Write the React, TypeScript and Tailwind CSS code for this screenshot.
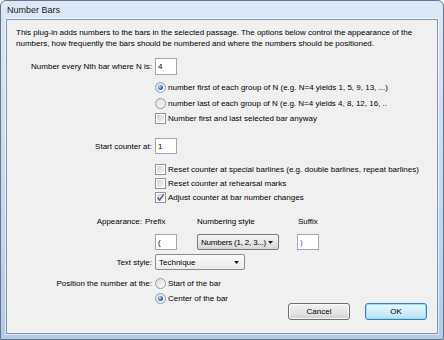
import React from "react";

function Radio({ checked, label }: { checked?: boolean; label: string }) {
  return (
    <div className="flex h-full items-center">
      <span className="flex h-[11px] w-[11px] shrink-0 items-center justify-center rounded-full border border-[#9a9c9e] bg-linear-to-br from-[#d9dbdd] to-[#fbfbfb]">
        {checked && (
          <span className="h-[5px] w-[5px] rounded-full bg-[radial-gradient(circle_at_35%_35%,#b6e0fb,#2a6cb8_60%,#19488a)]" />
        )}
      </span>
      <span className="ml-[2px] whitespace-nowrap">{label}</span>
    </div>
  );
}

function Check({ checked, label }: { checked?: boolean; label: string }) {
  return (
    <div className="flex h-full items-center">
      <span className="flex h-[11px] w-[11px] shrink-0 items-center justify-center border border-[#939597] bg-white">
        <span className="flex h-[7px] w-[7px] items-center justify-center bg-linear-to-br from-[#d3d5d8] to-[#f6f6f6]">
          {checked && (
            <svg width="9" height="9" viewBox="0 0 9 9" className="overflow-visible">
              <path d="M1.5 4.5 L3.6 7 L7.8 1.2" fill="none" stroke="#4a5f8f" strokeWidth="1.4" />
            </svg>
          )}
        </span>
      </span>
      <span className="ml-[2px] whitespace-nowrap">{label}</span>
    </div>
  );
}

function TextBox({ value, className }: { value: string; className?: string }) {
  return (
    <div className={`flex h-full w-[22px] items-center border border-[#a3a6ad] bg-white pl-[2px] ${className ?? ""}`}>
      {value}
    </div>
  );
}

function Arrow() {
  return (
    <svg width="5" height="3" viewBox="0 0 5 3" className="shrink-0">
      <polygon points="0,0 5,0 2.5,3" fill="#1a1a1a" />
    </svg>
  );
}

export default function App() {
  return (
    <div className="h-[340px] w-[444px] font-['Liberation_Sans',Arial,sans-serif] text-black">
      <div className="flex h-full w-full flex-col rounded-t-[6px] border border-[#65768b] bg-linear-to-b from-[#dce8f5] via-[#c9dbee] to-[#b4cbe5] px-[5px] pb-[5px]">
        <div className="flex h-[18px] items-center pl-[1px] pt-[2px] text-[9px] text-[#1b1b1b]">Number Bars</div>

        <div className="flex flex-1 flex-col border border-[#8397ad] bg-[#f0f0f0] pl-[9px] pr-[10px] pt-[7px] text-[8px] leading-[11px] shadow-[0_0_0_1px_rgba(255,255,255,0.55)]">
          <p className="whitespace-nowrap">
            This plug-in adds numbers to the bars in the selected passage. The options below control the appearance of the
            <br />
            numbers, how frequently the bars should be numbered and where the numbers should be positioned.
          </p>

          <div className="mt-[9px] flex h-[17px] items-center">
            <span className="w-[136px] whitespace-nowrap text-right">Number every Nth bar where N is:</span>
            <TextBox value="4" className="ml-[3px]" />
          </div>

          <div className="ml-[139px] mt-[4px] flex flex-col">
            <div className="h-[16px]">
              <Radio checked label="number first of each group of N (e.g. N=4 yields 1, 5, 9, 13, ...)" />
            </div>
            <div className="h-[16px]">
              <Radio label="number last of each group of N (e.g. N=4 yields 4, 8, 12, 16, .." />
            </div>
            <div className="h-[15px]">
              <Check label="Number first and last selected bar anyway" />
            </div>
          </div>

          <div className="mt-[12px] flex h-[16px] items-center">
            <span className="w-[136px] text-right">Start counter at:</span>
            <TextBox value="1" className="ml-[3px]" />
          </div>

          <div className="ml-[139px] mt-[8px] flex flex-col">
            <div className="h-[14px]">
              <Check label="Reset counter at special barlines (e.g. double barlines, repeat barlines)" />
            </div>
            <div className="h-[14px]">
              <Check label="Reset counter at rehearsal marks" />
            </div>
            <div className="h-[14px]">
              <Check checked label="Adjust counter at bar number changes" />
            </div>
          </div>

          <div className="mt-[12px] flex h-[11px] items-center whitespace-nowrap">
            <span className="w-[126px] text-right">Appearance:</span>
            <span className="ml-[3px] w-[52px]">Prefix</span>
            <span className="w-[101px]">Numbering style</span>
            <span>Suffix</span>
          </div>

          <div className="mt-[7px] flex h-[16px] items-stretch">
            <TextBox value="(" className="ml-[139px]" />
            <div className="ml-[20px] flex w-[82px] items-center justify-between overflow-hidden rounded-[2px] border border-[#7a7a7a] bg-linear-to-b from-[#f4f4f4] via-[#e8e8e8] to-[#d6d6d6] pl-[3px] pr-[5px]">
              <span className="whitespace-nowrap tracking-[-0.2px]">Numbers (1, 2, 3...)</span>
              <Arrow />
            </div>
            <TextBox value=")" className="ml-[18px] text-[#2f62a8]" />
          </div>

          <div className="mt-[4px] flex h-[16px] items-center">
            <span className="w-[136px] text-right">Text style:</span>
            <div className="ml-[3px] flex h-full w-[90px] items-center justify-between rounded-[2px] border border-[#8c8c8c] bg-linear-to-b from-[#fafafa] to-[#ebebeb] pl-[3px] pr-[5px]">
              <span>Technique</span>
              <Arrow />
            </div>
          </div>

          <div className="mt-[6px] flex items-start justify-between">
            <div className="flex">
              <span className="flex h-[15px] w-[136px] items-center justify-end whitespace-nowrap">Position the number at the:</span>
              <div className="ml-[3px] flex flex-col">
                <div className="h-[15px]">
                  <Radio label="Start of the bar" />
                </div>
                <div className="h-[15px]">
                  <Radio checked label="Center of the bar" />
                </div>
              </div>
            </div>

            <div className="flex gap-[15px] pt-[27px]">
              <button className="flex h-[17px] w-[62px] items-center justify-center rounded-[3px] border border-[#707070] bg-linear-to-b from-[#f3f3f3] via-[#e6e6e6] to-[#d2d2d2] text-[8px] shadow-[inset_0_0_0_1px_rgba(255,255,255,0.7)]">
                Cancel
              </button>
              <button className="flex h-[17px] w-[62px] items-center justify-center rounded-[3px] border border-[#3c7fb1] bg-linear-to-b from-[#eaf6fd] via-[#d3eefc] to-[#b9e1f8] text-[8px] shadow-[inset_0_0_0_1px_rgba(140,220,255,0.9)]">
                OK
              </button>
            </div>
          </div>
        </div>
      </div>
    </div>
  );
}
